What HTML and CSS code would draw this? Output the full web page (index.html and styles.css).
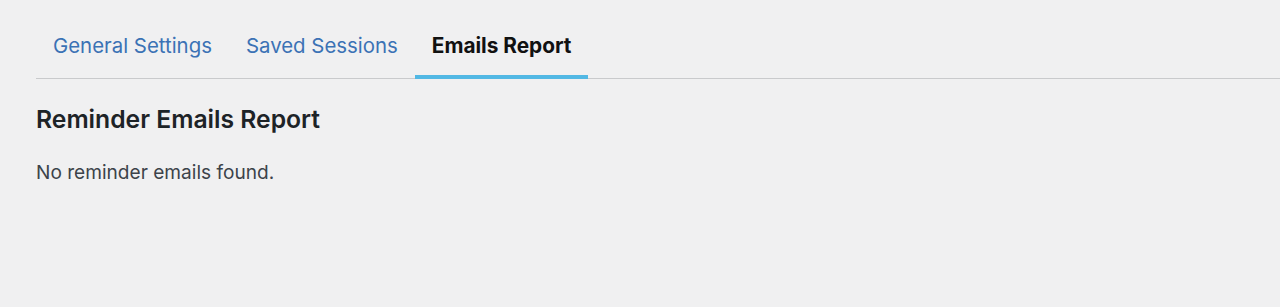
FILE: index.html
```html
<!DOCTYPE html>
<html>
<head>
<meta charset="utf-8">
<link rel="stylesheet" href="styles.css">
</head>
<body>
<div class="wrap">
  <nav class="tabs">
    <a class="tab" href="#">General Settings</a>
    <a class="tab" href="#">Saved Sessions</a>
    <a class="tab active" href="#">Emails Report</a>
  </nav>
  <h2 class="title">Reminder Emails Report</h2>
  <p class="msg">No reminder emails found.</p>
</div>
</body>
</html>
```
FILE: styles.css
```css
html, body {
  margin: 0;
  padding: 0;
  background: #f0f0f1;
}
body {
  font-family: Inter, "Noto Sans", sans-serif;
  height: 307px;
  overflow: hidden;
}
.wrap {
  padding: 22px 0 0 36px;
}
.tabs {
  display: flex;
  border-bottom: 1px solid #c9cacc;
  padding-left: 0;
}
.tab {
  display: block;
  font-size: 20.4px;
  line-height: 25px;
  padding: 11px 17px 17px;
  color: #3b72b5;
  text-decoration: none;
  border-bottom: 4px solid transparent;
  margin-bottom: -1px;
}
.tab.active {
  color: #111;
  font-size: 20.8px;
  font-weight: 680;
  border-bottom-color: #52b8e4;
}
.title {
  margin: 25px 0 0;
  font-size: 24.7px;
  line-height: 30px;
  font-weight: 600;
  color: #1d2327;
}
.msg {
  margin: 25px 0 0;
  font-size: 19.1px;
  line-height: 26px;
  color: #3c434a;
}
```
